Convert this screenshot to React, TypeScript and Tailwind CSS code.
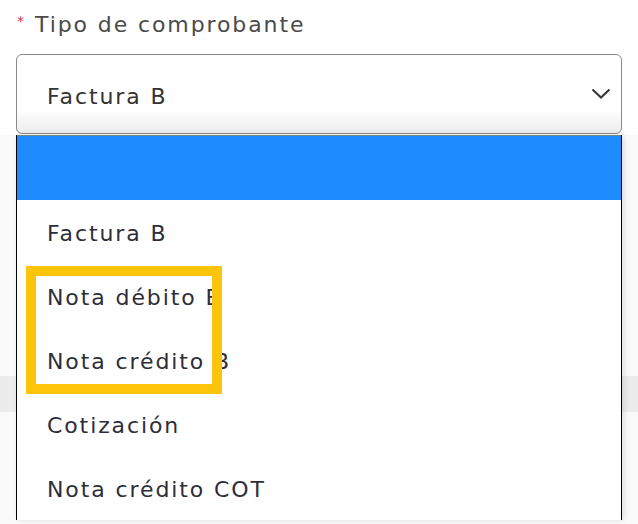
const options = ["Factura B", "Nota débito B", "Nota crédito B", "Cotización", "Nota crédito COT"];

export default function App() {
  return (
    <div className="relative h-[524px] w-[638px] overflow-hidden bg-[#fafafa] font-['DejaVu_Sans',sans-serif] tracking-[1.9px]">
      <div className="absolute left-0 right-0 top-[376px] h-[36px] bg-[#ececec]" />
      <div className="relative bg-white px-4 pt-[8px]">
        <label className="flex h-[32px] items-center gap-[11px] pl-[1px] text-[22px] leading-[32px] text-[#4a4a4a]">
          <span className="-translate-y-[3px] text-[14px] tracking-normal text-[#d0364b]">*</span>
          <span className="translate-y-[1px]">Tipo de comprobante</span>
        </label>
        <div className="mt-[14px] flex h-[80px] items-center justify-between rounded-[6px] border border-[#8a8a8a] bg-gradient-to-b from-white from-70% to-[#ededed] pl-[30px] pr-[10px]">
          <span className="pt-[4px] text-[22px] text-[#333]">Factura B</span>
          <svg width="20" height="12" viewBox="0 0 20 12" className="mb-[1px]">
            <polyline points="1.5,1.5 10,9.5 18.5,1.5" fill="none" stroke="#3a3a3a" strokeWidth="2.2" />
          </svg>
        </div>
        <div className="h-[1px]" />
      </div>
      <div className="relative px-4">
        <div className="relative border-x border-black bg-white shadow-[2px_0_6px_rgba(0,0,0,0.12)]">
          <div className="h-[65px] border-t border-[#6f8a7a] bg-[#1e8cff]" />
          {options.map((o) => (
            <div key={o} className="flex h-[64px] items-center pl-[30px] pt-[2px] text-[22px] text-[#2e2e3a]">
              {o}
            </div>
          ))}
        </div>
      </div>
      <div className="absolute left-[26px] top-[266px] h-[128px] w-[196px] border-[10px] border-[#fcc40a]" />
    </div>
  );
}
